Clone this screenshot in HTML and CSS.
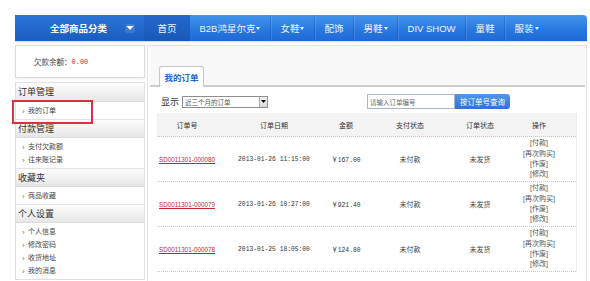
FILE: index.html
```html
<!DOCTYPE html>
<html lang="zh">
<head>
<meta charset="utf-8">
<title>我的订单</title>
<link rel="stylesheet" href="styles.css">
</head>
<body>
<div class="page">
  <nav class="nav">
    <div class="cat"><span class="cat-title">全部商品分类</span><span class="cat-btn"><svg width="8" height="6" viewBox="0 0 8 6"><path d="M0.5 1 L7.5 1 L4 5 Z" fill="#fff"/></svg></span></div>
    <a class="nav-item active">首页</a>
    <a class="nav-item">B2B鸿星尔克<i class="caret"></i></a>
    <a class="nav-item">女鞋<i class="caret"></i></a>
    <a class="nav-item">配饰</a>
    <a class="nav-item">男鞋<i class="caret"></i></a>
    <a class="nav-item">DIV SHOW</a>
    <a class="nav-item">童鞋</a>
    <a class="nav-item">服装<i class="caret"></i></a>
  </nav>
  <div class="main">
    <aside class="side">
      <div class="balance">欠款余额：<span class="red">0.00</span></div>
      <div class="menu">
        <div class="menu-head">订单管理</div>
        <ul class="menu-list">
          <li class="hl">我的订单</li>
        </ul>
        <div class="menu-head">付款管理</div>
        <ul class="menu-list">
          <li>支付欠款额</li>
          <li>往来账记录</li>
        </ul>
        <div class="menu-head">收藏夹</div>
        <ul class="menu-list">
          <li>商品收藏</li>
        </ul>
        <div class="menu-head">个人设置</div>
        <ul class="menu-list">
          <li>个人信息</li>
          <li>修改密码</li>
          <li>收货地址</li>
          <li>我的消息</li>
        </ul>
      </div>
    </aside>
    <section class="content">
      <div class="tabbar"><div class="tab">我的订单</div></div>
      <div class="filter">
        <span class="filter-label">显示</span>
        <div class="select"><span class="select-text">近三个月的订单</span><span class="select-btn"><svg width="5" height="3" viewBox="0 0 5 3"><path d="M0 0 L5 0 L2.5 3 Z" fill="#000"/></svg></span></div>
        <div class="search">
          <span class="search-input">请输入订单编号</span>
          <span class="search-btn">按订单号查询</span>
        </div>
      </div>
      <div class="table">
        <div class="row head">
          <div class="cell">订单号</div>
          <div class="cell">订单日期</div>
          <div class="cell">金额</div>
          <div class="cell">支付状态</div>
          <div class="cell">订单状态</div>
          <div class="cell">操作</div>
        </div>
        <div class="row">
          <div class="cell"><a class="order-link">SD0011301-000080</a></div>
          <div class="cell num">2013-01-26 11:15:00</div>
          <div class="cell num"><span class="yen">￥</span>167.00</div>
          <div class="cell">未付款</div>
          <div class="cell">未发货</div>
          <div class="cell ops"><span>[付款]</span><span>[再次购买]</span><span>[作废]</span><span>[修改]</span></div>
        </div>
        <div class="row">
          <div class="cell"><a class="order-link">SD0011301-000079</a></div>
          <div class="cell num">2013-01-26 10:27:00</div>
          <div class="cell num"><span class="yen">￥</span>921.40</div>
          <div class="cell">未付款</div>
          <div class="cell">未发货</div>
          <div class="cell ops"><span>[付款]</span><span>[再次购买]</span><span>[作废]</span><span>[修改]</span></div>
        </div>
        <div class="row">
          <div class="cell"><a class="order-link">SD0011301-000078</a></div>
          <div class="cell num">2013-01-25 18:05:00</div>
          <div class="cell num"><span class="yen">￥</span>124.80</div>
          <div class="cell">未付款</div>
          <div class="cell">未发货</div>
          <div class="cell ops"><span>[付款]</span><span>[再次购买]</span><span>[作废]</span><span>[修改]</span></div>
        </div>
      </div>
    </section>
  </div>
</div>
</body>
</html>
```

FILE: styles.css
```css
* { box-sizing: border-box; margin: 0; padding: 0; }
html, body { width: 590px; height: 281px; overflow: hidden; background: #fff; }
body {
  font-family: "Liberation Sans", "Noto Sans CJK SC", sans-serif;
  color: #333;
}
ul { list-style: none; }

.page { padding: 15px 3px 0 15px; }

/* ---------- nav ---------- */
.nav {
  display: flex;
  height: 26px;
  background: linear-gradient(#4496ee, #2a78e0 55%, #1f6ad6);
  border-radius: 0 4px 0 0;
  box-shadow: 0 1px 1px rgba(0,0,0,0.15);
}
.cat {
  width: 129px;
  display: flex;
  align-items: center;
  background: linear-gradient(#2c74d8, #1a5cc0);
  color: #fff;
  font-weight: bold;
  font-size: 9.5px;
}
.cat-title { padding-left: 35px; }
.cat-btn {
  margin-left: auto;
  margin-right: 9px;
  width: 10px;
  height: 9px;
  display: flex;
  align-items: center;
  justify-content: center;
  background: rgba(255,255,255,0.12);
  border-radius: 2px;
}
.nav-item {
  display: flex;
  align-items: center;
  padding: 0 9.5px;
  color: #eef5ff;
  font-size: 9.5px;
  border-left: 1px solid rgba(20,80,170,0.35);
  box-shadow: inset 1px 0 0 rgba(255,255,255,0.12);
}
.nav-item.active {
  width: 46px;
  justify-content: center;
  background: linear-gradient(#2468cc, #1a58b8);
  border-left: none;
  box-shadow: none;
}
.nav-item.active + .nav-item { border-left: none; box-shadow: none; }
.caret {
  display: inline-block;
  width: 0; height: 0;
  margin-left: 1px;
  border-left: 2.5px solid transparent;
  border-right: 2.5px solid transparent;
  border-top: 3px solid #fff;
}

/* ---------- layout ---------- */
.main {
  display: flex;
  gap: 2px;
  margin-top: 4px;
}
.side { width: 130px; flex: none; }

.balance {
  height: 33px;
  border: 1px solid #dcdcdc;
  box-shadow: 0 1px 2px rgba(0,0,0,0.08);
  display: flex;
  align-items: center;
  padding-left: 18px;
  font-size: 7.5px;
  color: #444;
}
.red { color: #d0232b; font-family: "Liberation Mono", monospace; font-size: 7px; }

.menu {
  margin-top: 4px;
  border: 1px solid #e0e0e0;
}
.menu-head {
  height: 19px;
  line-height: 19px;
  padding-left: 2px;
  font-size: 9px;
  color: #333;
  background: linear-gradient(#fdfdfd, #e6e6e6);
  border-bottom: 1px solid #dcdcdc;
}
.menu-list + .menu-head { border-top: 1px solid #e2e2e2; }
.menu-list { padding: 2px 0; }
.menu-list li {
  position: relative;
  height: 13px;
  line-height: 13px;
  padding-left: 12px;
  font-size: 7px;
  color: #444;
}
.menu-list li::before {
  content: "›";
  position: absolute;
  left: 6px;
  top: 0.5px;
  font-size: 8px;
  color: #777;
}
.menu-list li.hl::after {
  content: "";
  position: absolute;
  left: -4px;
  top: -4px;
  width: 77px;
  height: 20px;
  border: 2px solid #d6343e;
}

/* ---------- content ---------- */
.content {
  flex: 1;
  height: 240px;
  border: 1px solid #e2e2e2;
  border-bottom: none;
  background: #fff;
}
.tabbar {
  height: 41px;
  margin: 0 1px 0 2px;
  background: #f8f8f8;
  border-bottom: 2px solid #cdcdcd;
  display: flex;
  align-items: flex-end;
  padding-left: 9px;
}
.tab {
  width: 45px;
  height: 21px;
  margin-bottom: -2px;
  background: #fff;
  border: 1px solid #c8c8c8;
  border-bottom: none;
  border-radius: 3px 3px 0 0;
  display: flex;
  align-items: center;
  justify-content: center;
  font-size: 8.5px;
  font-weight: bold;
  color: #2465c4;
}

.filter {
  display: flex;
  align-items: center;
  height: 15px;
  margin-top: 7px;
  padding-left: 13px;
}
.filter-label { font-size: 9px; color: #333; }
.select {
  margin-left: 3px;
  width: 86px;
  height: 12px;
  border: 1px solid #8e8e8e;
  display: flex;
  align-items: center;
  background: #fff;
}
.select-text { flex: 1; font-size: 6.5px; color: #555; padding-left: 2px; }
.select-btn {
  width: 8px;
  height: 10px;
  background: linear-gradient(#f4f4f4, #d8d8d8);
  border-left: 1px solid #aaa;
  display: flex;
  align-items: center;
  justify-content: center;
}
.search {
  margin-left: 99px;
  display: flex;
  height: 15px;
}
.search-input {
  width: 88px;
  border: 1px solid #a9b6c8;
  font-size: 6.5px;
  color: #666;
  display: flex;
  align-items: center;
  padding-left: 2px;
}
.search-btn {
  width: 55px;
  background: linear-gradient(#4f98ea, #2f72d4);
  border-radius: 0 3px 3px 0;
  color: #fff;
  font-size: 7.5px;
  display: flex;
  align-items: center;
  justify-content: center;
}

.table {
  margin: 4px 0 0 9px;
  width: 420px;
  border-right: 1px solid #ececec;
}
.row {
  display: grid;
  grid-template-columns: 60px 114px 30px 98px 42px 76px;
  height: 45px;
  border-bottom: 1px dotted #c8c8c8;
  align-items: center;
}
.row.head {
  height: 24px;
  background: #f3f3f3;
}
.cell {
  text-align: center;
  font-size: 7px;
  color: #444;
  white-space: nowrap;
}
.head .cell { color: #333; }
.order-link {
  font-size: 6.3px;
  color: #c0282d;
  text-decoration: underline;
}
.num {
  font-family: "Liberation Mono", monospace;
  font-size: 6.3px;
  color: #333;
}
.yen { font-family: "Noto Sans CJK SC", sans-serif; }
.ops {
  display: flex;
  flex-direction: column;
  align-items: center;
  line-height: 10.3px;
  color: #555;
}
```
